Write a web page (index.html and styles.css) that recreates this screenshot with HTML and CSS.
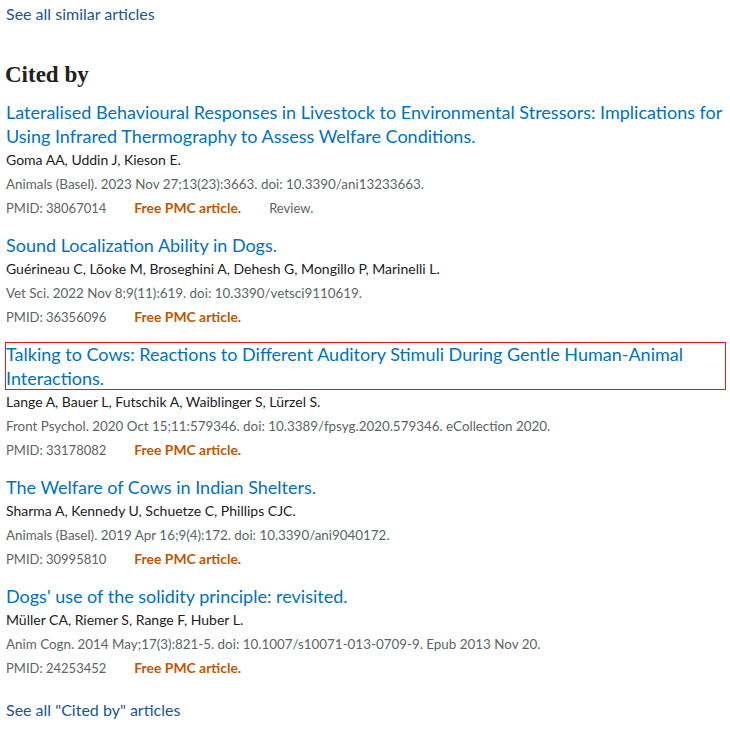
FILE: index.html
```html
<!DOCTYPE html>
<html lang="en">
<head>
<meta charset="utf-8">
<title>Cited by</title>
<link rel="stylesheet" href="styles.css">
</head>
<body>
<div class="page">
  <a class="see-all see-all-similar" href="#">See all similar articles</a>

  <section class="cited-by">
    <h2 class="heading">Cited by</h2>
    <ul class="docsums">
      <li class="docsum">
        <a class="docsum-title" href="#">Lateralised Behavioural Responses in Livestock to Environmental Stressors: Implications for Using Infrared Thermography to Assess Welfare Conditions.</a>
        <div class="authors">Goma AA, Uddin J, Kieson E.</div>
        <div class="citation">Animals (Basel). 2023 Nov 27;13(23):3663. doi: 10.3390/ani13233663.</div>
        <div class="meta"><span class="pmid">PMID: 38067014</span><span class="free">Free PMC article.</span><span class="type">Review.</span></div>
      </li>
      <li class="docsum">
        <a class="docsum-title" href="#">Sound Localization Ability in Dogs.</a>
        <div class="authors">Guérineau C, Lõoke M, Broseghini A, Dehesh G, Mongillo P, Marinelli L.</div>
        <div class="citation">Vet Sci. 2022 Nov 8;9(11):619. doi: 10.3390/vetsci9110619.</div>
        <div class="meta"><span class="pmid">PMID: 36356096</span><span class="free">Free PMC article.</span></div>
      </li>
      <li class="docsum">
        <a class="docsum-title focused" href="#">Talking to Cows: Reactions to Different Auditory Stimuli During Gentle Human-Animal Interactions.</a>
        <div class="authors">Lange A, Bauer L, Futschik A, Waiblinger S, Lürzel S.</div>
        <div class="citation">Front Psychol. 2020 Oct 15;11:579346. doi: 10.3389/fpsyg.2020.579346. eCollection 2020.</div>
        <div class="meta"><span class="pmid">PMID: 33178082</span><span class="free">Free PMC article.</span></div>
      </li>
      <li class="docsum">
        <a class="docsum-title" href="#">The Welfare of Cows in Indian Shelters.</a>
        <div class="authors">Sharma A, Kennedy U, Schuetze C, Phillips CJC.</div>
        <div class="citation">Animals (Basel). 2019 Apr 16;9(4):172. doi: 10.3390/ani9040172.</div>
        <div class="meta"><span class="pmid">PMID: 30995810</span><span class="free">Free PMC article.</span></div>
      </li>
      <li class="docsum">
        <a class="docsum-title" href="#">Dogs' use of the solidity principle: revisited.</a>
        <div class="authors">Müller CA, Riemer S, Range F, Huber L.</div>
        <div class="citation">Anim Cogn. 2014 May;17(3):821-5. doi: 10.1007/s10071-013-0709-9. Epub 2013 Nov 20.</div>
        <div class="meta"><span class="pmid">PMID: 24253452</span><span class="free">Free PMC article.</span></div>
      </li>
    </ul>
    <a class="see-all" href="#">See all "Cited by" articles</a>
  </section>
</div>
</body>
</html>
```
FILE: styles.css
```css
html, body {
  margin: 0;
  padding: 0;
  background: #ffffff;
}

.page {
  padding: 2px 4px 0 5px;
  font-family: "Lato", "Liberation Sans", sans-serif;
  color: #212121;
}

.see-all {
  display: block;
  font-size: 16px;
  line-height: 24px;
  color: #205493;
  text-decoration: none;
  padding-left: 1px;
}

.cited-by {
  margin-top: 34px;
}

.heading {
  margin: 0 0 10px 0;
  font-family: "Liberation Serif", serif;
  font-weight: bold;
  font-size: 23px;
  line-height: 30px;
  color: #212121;
}

.docsums {
  list-style: none;
  margin: 0 0 18px 0;
  padding: 0;
  display: flex;
  flex-direction: column;
  gap: 13px;
}

.docsum-title {
  display: block;
  font-size: 18px;
  line-height: 24px;
  color: #0071bc;
  text-decoration: none;
  padding-left: 1px;
}

.docsum-title.focused {
  outline: 1px solid #e81a1a;
  outline-offset: -1px;
}

.authors {
  font-size: 14px;
  line-height: 24px;
  color: #212121;
  padding-left: 1px;
}

.citation,
.meta {
  line-height: 24px;
  color: #5b6562;
  padding-left: 1px;
}

.citation {
  font-size: 13.4px;
}

.meta {
  font-size: 13px;
  display: flex;
  align-items: baseline;
  gap: 28px;
}

.free {
  color: #c05600;
  font-weight: bold;
  font-size: 13.9px;
}
```
